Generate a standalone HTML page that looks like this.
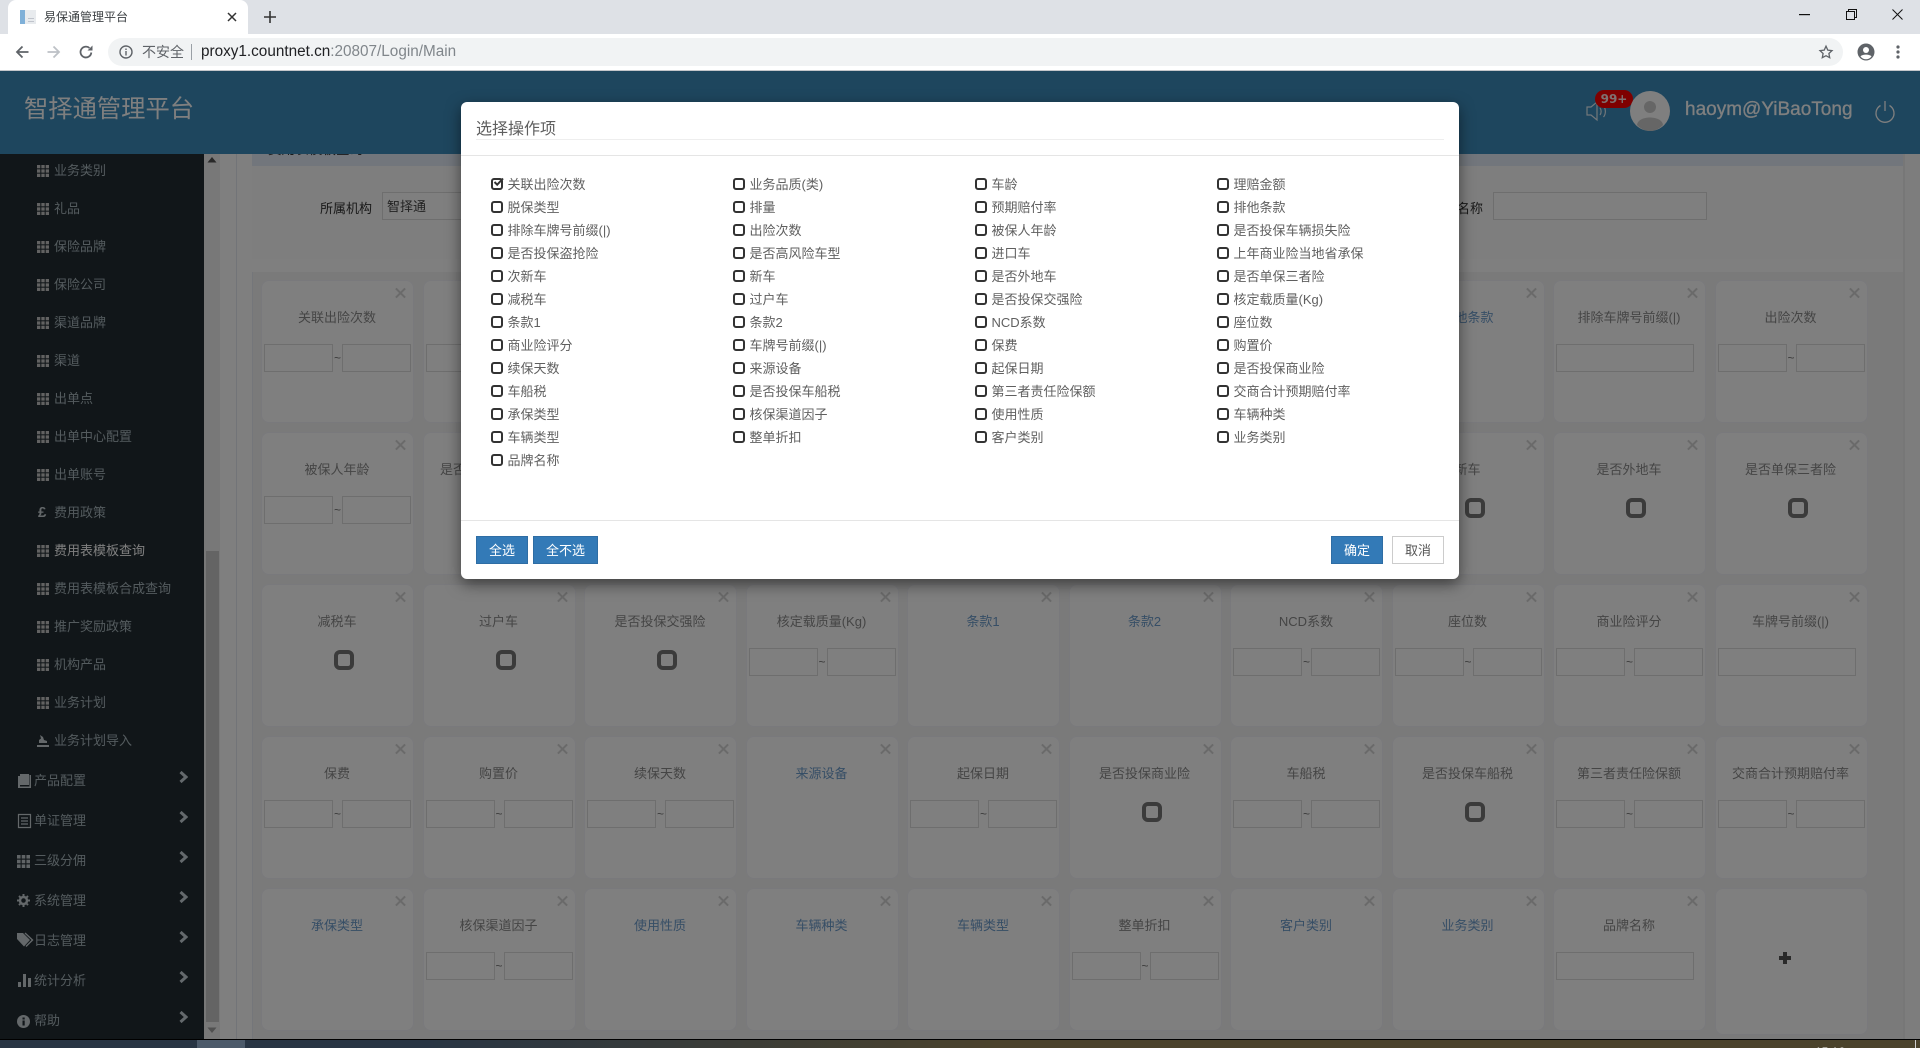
<!DOCTYPE html>
<html lang="zh-CN">
<head>
<meta charset="utf-8">
<title>易保通管理平台</title>
<style>
*,*::before,*::after{box-sizing:border-box;margin:0;padding:0}
html,body{width:1920px;height:1048px;overflow:hidden;background:#f5f5f5}
body{position:relative;font-family:"Liberation Sans","Noto Sans CJK SC",sans-serif;font-size:13px;color:#555}
/* browser chrome */
#strip{position:absolute;left:0;top:0;width:1920px;height:34px;background:#dee1e6}
#tab{position:absolute;left:8px;top:0;width:240px;height:34px;background:#fff;border-radius:8px 8px 0 0}
#bar{position:absolute;left:0;top:34px;width:1920px;height:36px;background:#fff}
#line{position:absolute;left:0;top:70px;width:1920px;height:1px;background:#c4c6ca}
#addr{position:absolute;left:108px;top:38px;width:1735px;height:28px;background:#f1f3f4;border-radius:14px}
.ctext{position:absolute;line-height:20px;white-space:nowrap}
svg{position:absolute;overflow:visible}
/* page */
#head{position:absolute;left:0;top:71px;width:1920px;height:83px;background:#3c8dbc;z-index:2}
#side{position:absolute;left:0;top:154px;width:204px;height:885px;background:#222d32;overflow:hidden}
.s{position:absolute;left:0;width:204px;height:18px;line-height:18px;color:#a8b6bd;white-space:nowrap;padding-left:54px;transform:translateY(1px)}
.m{padding-left:34px}
.s svg.i{left:37px;top:3px;width:12px;height:12px;fill:#c4c4c4}
.m svg.i{left:17px;top:3px;width:13px;height:13px;fill:#c0c8cd}
.s svg.ch{left:179px;top:-10px;width:9px;height:12px;fill:none;stroke:#c8d3d9;stroke-width:3}
.cur{color:#fff}
#track{position:absolute;left:204px;top:154px;width:16px;height:885px;background:#f1f1f1}
#thumb{position:absolute;left:206px;top:551px;width:13px;height:471px;background:#c9c9c9}
#gut{position:absolute;left:220px;top:154px;width:32px;height:885px;background:#ffffff}
#gline{position:absolute;left:236px;top:154px;width:1px;height:885px;background:#e4e8f0}
#main{position:absolute;left:252px;top:154px;width:1651px;height:885px;background:#f5f5f5;border-left:1px solid #e8ecf4}
#rgut{position:absolute;left:1903px;top:154px;width:17px;height:885px;background:#fafafa;border-left:2px solid #eeeeee}
#band{position:absolute;left:252px;top:154px;width:1651px;height:12px;background:#e4ecf8}
#panel{position:absolute;left:252px;top:166px;width:1651px;height:93px;background:#fcfcfc}
#band2{position:absolute;left:252px;top:259px;width:1651px;height:13px;background:#fff}
.ph{position:absolute;line-height:18px;white-space:nowrap;color:#333}
.in{position:absolute;top:192px;height:28px;border:1px solid #ddd;background:#fff;line-height:27px;padding-left:4px;color:#444}
/* cards */
.k{position:absolute;width:153px;height:143px;background:#fff;border-radius:8px;border:1px solid #f2f3f8;text-align:center}
.k::before,.k::after{content:"";position:absolute;left:132px;top:11px;width:13px;height:2px;background:#d4d4d4}
.k::before{transform:rotate(45deg)}.k::after{transform:rotate(-45deg)}
.k.add::before,.k.add::after{display:none}
.k b{position:absolute;left:-1.500px;top:28px;width:153px;font-weight:400;line-height:18px;color:#8a8a8a;white-space:nowrap}
.k b.l{color:#6d9ccc}
.k i{position:absolute;border:1px solid #ddd;height:28px;top:63px;background:#fff}
.k i.a{left:2px;width:69px}.k i.b{left:80px;width:69px}
.k i.w{left:2px;width:138px}
.k i.t{left:72px;top:65px;width:20px;height:20px;border:4px solid #777;border-radius:6px;background:transparent}
.k em{position:absolute;left:71px;top:67px;width:9px;font-style:normal;line-height:20px;font-size:12px;color:#777}
.c0{left:261px}.c1{left:422.5px}.c2{left:584px}.c3{left:745.5px}.c4{left:907px}.c5{left:1068.5px}.c6{left:1230px}.c7{left:1391.5px}.c8{left:1553px}.c9{left:1714.500px}
.r0{top:280px}.r1{top:432px}.r2{top:584px}.r3{top:736px}.r4{top:888px}
#ov{position:absolute;left:0;top:71px;width:1920px;height:968px;background:rgba(0,0,0,.5);z-index:3}
/* dialog */
#dlg{position:absolute;left:461px;top:102px;width:998px;height:477px;background:#fff;border-radius:6px;box-shadow:0 5px 15px rgba(0,0,0,.5);z-index:4}
#dt{position:absolute;left:15px;top:17px;font-size:16px;line-height:22px;color:#5f5f5f;white-space:nowrap}
#dl1{position:absolute;left:15px;top:37px;width:968px;height:1px;background:#eee}
#dl2{position:absolute;left:0;top:53px;width:998px;height:1px;background:#e5e5e5}
#dl3{position:absolute;left:0;top:418px;width:998px;height:1px;background:#e5e5e5}
#lst{position:absolute;left:30px;top:70px;display:grid;grid-template-columns:repeat(4,242px);grid-auto-rows:23px}
#lst div{position:relative;padding-left:16.500px;line-height:25px;height:23px;color:#5f5f5f;white-space:nowrap}
#lst div::before{content:"";position:absolute;left:0;top:6px;width:12px;height:12px;border:2px solid #333;border-radius:3px}
.btn{position:absolute;top:434px;height:28px;line-height:28px;text-align:center;background:#337ab7;border:1px solid #2e6da4;color:#fff}
.btn.d{background:#fff;border:1px solid #ccc;color:#555}
/* taskbar */
#tb{position:absolute;left:0;top:1039px;width:1920px;height:9px;border-top:1px solid #000;background:linear-gradient(90deg,#283544 0,#283544 420px,#4b432c 1000px,#4b432c 100%);z-index:5;overflow:hidden}
#tbh{position:absolute;left:197px;top:0;width:48px;height:8px;background:#4c5a6a}
#tbt{position:absolute;left:1815px;top:5px;color:#fff;font-size:12px;line-height:14px}
#tbl{position:absolute;left:1915px;top:0;width:1px;height:8px;background:#cfcfcf}
</style>
</head>
<body>
<svg width="0" height="0" style="position:absolute">
<defs>
<symbol id="th" viewBox="0 0 12 12"><rect x="0" y="0" width="3.3" height="3.3"/><rect x="4.35" y="0" width="3.3" height="3.3"/><rect x="8.7" y="0" width="3.3" height="3.3"/><rect x="0" y="4.35" width="3.3" height="3.3"/><rect x="4.35" y="4.35" width="3.3" height="3.3"/><rect x="8.7" y="4.35" width="3.3" height="3.3"/><rect x="0" y="8.7" width="3.3" height="3.3"/><rect x="4.35" y="8.7" width="3.3" height="3.3"/><rect x="8.7" y="8.7" width="3.3" height="3.3"/></symbol>
<symbol id="chv" viewBox="0 0 9 12"><path d="M1.5 1l5.5 5-5.5 5"/></symbol>
</defs>
</svg>

<!-- Browser chrome -->
<div id="strip"></div>
<div id="tab"></div>
<svg style="left:20px;top:10px" width="16" height="14" viewBox="0 0 16 14"><rect x="0" y="0" width="5" height="14" fill="#7fb0d8"/><rect x="5" y="0" width="11" height="14" fill="#e8ebee"/><rect x="8" y="8" width="6" height="1" fill="#c0c4cc"/><rect x="8" y="11" width="6" height="1" fill="#c0c4cc"/></svg>
<div class="ctext" style="left:44px;top:7px;font-size:12px;color:#3c4043">易保通管理平台</div>
<svg style="left:228px;top:13px" width="8" height="8" viewBox="0 0 8 8"><path d="M0 0l8 8M8 0L0 8" stroke="#333" stroke-width="1.5"/></svg>
<svg style="left:264px;top:11px" width="12" height="12" viewBox="0 0 12 12"><path d="M6 0v12M0 6h12" stroke="#333" stroke-width="1.6"/></svg>
<svg style="left:1799px;top:14px" width="11" height="2"><rect width="11" height="1.2" fill="#111"/></svg>
<svg style="left:1846px;top:9px" width="11" height="11" viewBox="0 0 11 11"><path d="M.5 2.5h8v8h-8zM2.5 2.5v-2h8v8h-2" fill="none" stroke="#111"/></svg>
<svg style="left:1892px;top:9px" width="11" height="11" viewBox="0 0 11 11"><path d="M.5.5l10 10M10.500 .5l-10 10" stroke="#111" stroke-width="1"/></svg>
<div id="bar"></div>
<div id="line"></div>
<svg style="left:15px;top:45px" width="14" height="14" viewBox="0 0 14 14"><path d="M13.500 7H2M7.500 1.500L2 7l5.500 5.500" fill="none" stroke="#5f6368" stroke-width="1.8"/></svg>
<svg style="left:47px;top:45px" width="14" height="14" viewBox="0 0 14 14"><path d="M.5 7H12M6.500 1.500L12 7l-5.500 5.500" fill="none" stroke="#bdc1c6" stroke-width="1.8"/></svg>
<svg style="left:79px;top:45px" width="14" height="14" viewBox="0 0 14 14"><path d="M12.300 7.500A5.400 5.400 0 1 1 10.500 3" fill="none" stroke="#5f6368" stroke-width="1.8"/><path d="M8.500 5.500H13.500V.5z" fill="#5f6368"/></svg>
<div id="addr"></div>
<svg style="left:119px;top:45px" width="14" height="14" viewBox="0 0 14 14"><circle cx="7" cy="7" r="6" fill="none" stroke="#5f6368" stroke-width="1.400"/><rect x="6.300" y="6" width="1.400" height="4.500" fill="#5f6368"/><rect x="6.300" y="3.500" width="1.400" height="1.500" fill="#5f6368"/></svg>
<div class="ctext" style="left:142px;top:42px;font-size:14px;color:#5f6368">不安全</div>
<div style="position:absolute;left:191px;top:44px;width:1px;height:16px;background:#9aa0a6"></div>
<div class="ctext" style="left:201px;top:42px;font-size:15.300px;color:#80868b"><span style="color:#202124">proxy1.countnet.cn</span>:20807/Login/Main</div>
<svg style="left:1819px;top:45px" width="14" height="14" viewBox="0 0 14 14"><path d="M7 1.200l1.800 3.900 4.200.5-3.100 2.900.8 4.200L7 10.700l-3.700 2 .8-4.200L1 5.600l4.200-.5z" fill="none" stroke="#5f6368" stroke-width="1.300"/></svg>
<svg style="left:1857px;top:43px" width="18" height="18" viewBox="0 0 18 18"><circle cx="9" cy="9" r="8.500" fill="#5f6368"/><circle cx="9" cy="7" r="3" fill="#fff"/><path d="M3.500 13.500c1.500-2.500 9.500-2.500 11 0-1.500 2-3.500 2.800-5.500 2.800s-4-.8-5.500-2.800z" fill="#fff"/></svg>
<svg style="left:1896px;top:45px" width="4" height="14" viewBox="0 0 4 14"><circle cx="2" cy="2" r="1.600" fill="#5f6368"/><circle cx="2" cy="7" r="1.600" fill="#5f6368"/><circle cx="2" cy="12" r="1.600" fill="#5f6368"/></svg>

<!-- Page -->
<div id="main"></div>
<div id="band"></div>
<div id="panel"></div>
<div id="band2"></div>
<div class="ph" style="left:268px;top:141px;font-size:13.600px;z-index:1">费用表模板查询</div>
<div class="ph" style="left:320px;top:200px">所属机构</div>
<div class="in" style="left:382px;width:230px">智择通</div>
<div class="ph" style="left:1457px;top:200px">名称</div>
<div class="in" style="left:1493px;width:214px"></div>
<div id="gut"></div><div id="gline"></div>
<div id="rgut"></div>
<div id="track"></div><div id="thumb"></div>
<svg style="left:207px;top:157px" width="10" height="6" viewBox="0 0 10 6"><path d="M5 0l4.500 5.500H.5z" fill="#505050"/></svg>
<svg style="left:207px;top:1027px" width="10" height="6" viewBox="0 0 10 6"><path d="M5 6L9.500.5H.5z" fill="#a0a0a0"/></svg>

<!-- Cards -->
<div class="k c0 r0"><b>关联出险次数</b><i class="a"></i><em>~</em><i class="b"></i></div>
<div class="k c1 r0"><b>业务品质(类)</b><i class="a"></i><em>~</em><i class="b"></i></div>
<div class="k c2 r0"><b>车龄</b></div>
<div class="k c3 r0"><b>理赔金额</b></div>
<div class="k c4 r0"><b>脱保类型</b></div>
<div class="k c5 r0"><b>排量</b></div>
<div class="k c6 r0"><b>预期赔付率</b></div>
<div class="k c7 r0"><b class="l">排他条款</b></div>
<div class="k c8 r0"><b>排除车牌号前缀(|)</b><i class="w"></i></div>
<div class="k c9 r0"><b>出险次数</b><i class="a"></i><em>~</em><i class="b"></i></div>

<div class="k c0 r1"><b>被保人年龄</b><i class="a"></i><em>~</em><i class="b"></i></div>
<div class="k c1 r1"><b>是否投保车辆损失险</b><i class="t"></i></div>
<div class="k c2 r1"><b>是否投保盗抢险</b></div>
<div class="k c3 r1"><b>是否高风险车型</b></div>
<div class="k c4 r1"><b>进口车</b></div>
<div class="k c5 r1"><b>上年商业险当地省承保</b></div>
<div class="k c6 r1"><b>次新车</b></div>
<div class="k c7 r1"><b>新车</b><i class="t"></i></div>
<div class="k c8 r1"><b>是否外地车</b><i class="t"></i></div>
<div class="k c9 r1"><b>是否单保三者险</b><i class="t"></i></div>

<div class="k c0 r2"><b>减税车</b><i class="t"></i></div>
<div class="k c1 r2"><b>过户车</b><i class="t"></i></div>
<div class="k c2 r2"><b>是否投保交强险</b><i class="t"></i></div>
<div class="k c3 r2"><b>核定载质量(Kg)</b><i class="a"></i><em>~</em><i class="b"></i></div>
<div class="k c4 r2"><b class="l">条款1</b></div>
<div class="k c5 r2"><b class="l">条款2</b></div>
<div class="k c6 r2"><b>NCD系数</b><i class="a"></i><em>~</em><i class="b"></i></div>
<div class="k c7 r2"><b>座位数</b><i class="a"></i><em>~</em><i class="b"></i></div>
<div class="k c8 r2"><b>商业险评分</b><i class="a"></i><em>~</em><i class="b"></i></div>
<div class="k c9 r2"><b>车牌号前缀(|)</b><i class="w"></i></div>

<div class="k c0 r3"><b>保费</b><i class="a"></i><em>~</em><i class="b"></i></div>
<div class="k c1 r3"><b>购置价</b><i class="a"></i><em>~</em><i class="b"></i></div>
<div class="k c2 r3"><b>续保天数</b><i class="a"></i><em>~</em><i class="b"></i></div>
<div class="k c3 r3"><b class="l">来源设备</b></div>
<div class="k c4 r3"><b>起保日期</b><i class="a"></i><em>~</em><i class="b"></i></div>
<div class="k c5 r3"><b>是否投保商业险</b><i class="t"></i></div>
<div class="k c6 r3"><b>车船税</b><i class="a"></i><em>~</em><i class="b"></i></div>
<div class="k c7 r3"><b>是否投保车船税</b><i class="t"></i></div>
<div class="k c8 r3"><b>第三者责任险保额</b><i class="a"></i><em>~</em><i class="b"></i></div>
<div class="k c9 r3"><b>交商合计预期赔付率</b><i class="a"></i><em>~</em><i class="b"></i></div>

<div class="k c0 r4"><b class="l">承保类型</b></div>
<div class="k c1 r4"><b>核保渠道因子</b><i class="a"></i><em>~</em><i class="b"></i></div>
<div class="k c2 r4"><b class="l">使用性质</b></div>
<div class="k c3 r4"><b class="l">车辆种类</b></div>
<div class="k c4 r4"><b class="l">车辆类型</b></div>
<div class="k c5 r4"><b>整单折扣</b><i class="a"></i><em>~</em><i class="b"></i></div>
<div class="k c6 r4"><b class="l">客户类别</b></div>
<div class="k c7 r4"><b class="l">业务类别</b></div>
<div class="k c8 r4"><b>品牌名称</b><i class="w"></i></div>
<div class="k c9 r4 add" style="height:147px"><svg style="left:63px;top:63px" width="12" height="12" viewBox="0 0 12 12"><path d="M6 0v12M0 6h12" stroke="#555" stroke-width="4"/></svg></div>

<!-- Sidebar -->
<div id="side">
<div class="s" style="top:7px"><svg class="i"><use href="#th"/></svg>业务类别</div>
<div class="s" style="top:45px"><svg class="i"><use href="#th"/></svg>礼品</div>
<div class="s" style="top:83px"><svg class="i"><use href="#th"/></svg>保险品牌</div>
<div class="s" style="top:121px"><svg class="i"><use href="#th"/></svg>保险公司</div>
<div class="s" style="top:159px"><svg class="i"><use href="#th"/></svg>渠道品牌</div>
<div class="s" style="top:197px"><svg class="i"><use href="#th"/></svg>渠道</div>
<div class="s" style="top:235px"><svg class="i"><use href="#th"/></svg>出单点</div>
<div class="s" style="top:273px"><svg class="i"><use href="#th"/></svg>出单中心配置</div>
<div class="s" style="top:311px"><svg class="i"><use href="#th"/></svg>出单账号</div>
<div class="s" style="top:349px"><span style="position:absolute;left:38px;top:0;font-size:15px;font-weight:700;color:#c8d0d5">£</span>费用政策</div>
<div class="s cur" style="top:387px"><svg class="i"><use href="#th"/></svg>费用表模板查询</div>
<div class="s" style="top:425px"><svg class="i"><use href="#th"/></svg>费用表模板合成查询</div>
<div class="s" style="top:463px"><svg class="i"><use href="#th"/></svg>推广奖励政策</div>
<div class="s" style="top:501px"><svg class="i"><use href="#th"/></svg>机构产品</div>
<div class="s" style="top:539px"><svg class="i"><use href="#th"/></svg>业务计划</div>
<div class="s" style="top:577px"><svg style="left:37px;top:3px" width="12" height="12" viewBox="0 0 12 12"><path d="M2 5l2-1.500L3 0l3 2 1 3 3 1v2H2zM0 10h12v2H0z" fill="#c8d0d5"/></svg>业务计划导入</div>

<div class="s m" style="top:617px"><svg style="left:18px;top:2px" width="13" height="14" viewBox="0 0 13 14"><path d="M2 0h9v11H2zM11.500 1H13v13H2v-1.500h9.500z" fill="#c8d0d5"/><path d="M0 2h2v12H0z" fill="#c8d0d5"/></svg>产品配置<svg class="ch" style="top:-1px"><use href="#chv"/></svg></div>
<div class="s m" style="top:657px"><svg style="left:18px;top:2px" width="13" height="14" viewBox="0 0 13 14"><path d="M.5.500h12v13H.5zM3 4h7M3 7h7M3 10h7" fill="none" stroke="#c8d0d5" stroke-width="1.200"/></svg>单证管理<svg class="ch" style="top:-1px"><use href="#chv"/></svg></div>
<div class="s m" style="top:697px"><svg class="i" style="left:17px"><use href="#th"/></svg>三级分佣<svg class="ch" style="top:-1px"><use href="#chv"/></svg></div>
<div class="s m" style="top:737px"><svg style="left:17px;top:2px" width="13" height="13" viewBox="0 0 13 13"><circle cx="6.500" cy="6.500" r="3.500" fill="none" stroke="#c8d0d5" stroke-width="2.500"/><path d="M6.500 0v13M0 6.500h13M2 2l9 9M11 2l-9 9" stroke="#c8d0d5" stroke-width="2" stroke-dasharray="2 9"/></svg>系统管理<svg class="ch" style="top:-1px"><use href="#chv"/></svg></div>
<div class="s m" style="top:777px"><svg style="left:17px;top:1px" width="16" height="14" viewBox="0 0 16 14"><path d="M0 0h6l7 7-6 6.500L0 6z" fill="#c8d0d5"/><path d="M8 0l7.500 7-6.500 6.500" fill="none" stroke="#c8d0d5" stroke-width="1.400"/></svg>日志管理<svg class="ch" style="top:-1px"><use href="#chv"/></svg></div>
<div class="s m" style="top:817px"><svg style="left:18px;top:2px" width="13" height="13" viewBox="0 0 13 13"><path d="M0 8h3v5H0zM5 0h3v13H5zM10 4h3v9h-3z" fill="#c8d0d5"/></svg>统计分析<svg class="ch" style="top:-1px"><use href="#chv"/></svg></div>
<div class="s m" style="top:857px"><svg style="left:17px;top:3px" width="13" height="13" viewBox="0 0 13 13"><circle cx="6.500" cy="6.500" r="6.500" fill="#c8d0d5"/><rect x="5.500" y="5.500" width="2.200" height="5" fill="#222d32"/><rect x="5.500" y="2.500" width="2.200" height="2" fill="#222d32"/></svg>帮助<svg class="ch" style="top:-1px"><use href="#chv"/></svg></div>
</div>

<!-- Header -->
<div id="head">
<div class="ctext" style="left:24px;top:22px;font-size:24.300px;line-height:34px;color:#fff">智择通管理平台</div>
<svg style="left:1586px;top:30px" width="22" height="20" viewBox="0 0 22 20"><path d="M1 6h4l6-5v18l-6-5H1zM14 7c1.500 2 1.500 5 0 7M17.500 5c2.500 3 2.500 8 0 11" fill="none" stroke="#ffffff" stroke-width="1.200" opacity=".85"/></svg>
<div style="position:absolute;left:1595px;top:19px;width:38px;height:18px;border-radius:9px;background:#f00;color:#ffe0e0;font-size:12px;font-weight:700;line-height:18px;text-align:center;font-family:'DejaVu Sans',sans-serif">99+</div>
<svg style="left:1630px;top:20px" width="40" height="40" viewBox="0 0 40 40"><circle cx="20" cy="20" r="20" fill="#fff"/><circle cx="20" cy="16" r="6" fill="#ccc"/><path d="M7 34c1-10 25-10 26 0-3.500 3.700-8 6-13 6s-9.500-2.300-13-6z" fill="#ccc"/></svg>
<div class="ctext" style="left:1685px;top:26px;font-size:19px;line-height:26px;color:#fff;-webkit-text-stroke:.3px #fff">haoym@YiBaoTong</div>
<svg style="left:1875px;top:30px" width="20" height="22" viewBox="0 0 20 22"><path d="M5.500 4.500a9 9 0 1 0 9 0M10 0v10" fill="none" stroke="#fff" stroke-width="1.300"/></svg>
</div>

<div id="ov"></div>

<!-- Dialog -->
<div id="dlg">
<div id="dt">选择操作项</div>
<div id="dl1"></div>
<div id="dl2"></div>
<div id="lst">
<div>关联出险次数<svg style="left:1px;top:5px" width="12" height="11" viewBox="0 0 12 11"><path d="M2.500 5l2.700 2.700L11 1.500" fill="none" stroke="#333" stroke-width="2"/></svg></div><div>业务品质(类)</div><div>车龄</div><div>理赔金额</div>
<div>脱保类型</div><div>排量</div><div>预期赔付率</div><div>排他条款</div>
<div>排除车牌号前缀(|)</div><div>出险次数</div><div>被保人年龄</div><div>是否投保车辆损失险</div>
<div>是否投保盗抢险</div><div>是否高风险车型</div><div>进口车</div><div>上年商业险当地省承保</div>
<div>次新车</div><div>新车</div><div>是否外地车</div><div>是否单保三者险</div>
<div>减税车</div><div>过户车</div><div>是否投保交强险</div><div>核定载质量(Kg)</div>
<div>条款1</div><div>条款2</div><div>NCD系数</div><div>座位数</div>
<div>商业险评分</div><div>车牌号前缀(|)</div><div>保费</div><div>购置价</div>
<div>续保天数</div><div>来源设备</div><div>起保日期</div><div>是否投保商业险</div>
<div>车船税</div><div>是否投保车船税</div><div>第三者责任险保额</div><div>交商合计预期赔付率</div>
<div>承保类型</div><div>核保渠道因子</div><div>使用性质</div><div>车辆种类</div>
<div>车辆类型</div><div>整单折扣</div><div>客户类别</div><div>业务类别</div>
<div>品牌名称</div>
</div>
<div id="dl3"></div>
<div class="btn" style="left:15px;width:52px">全选</div>
<div class="btn" style="left:72px;width:65px">全不选</div>
<div class="btn" style="left:870px;width:52px">确定</div>
<div class="btn d" style="left:931px;width:52px">取消</div>
</div>

<!-- Taskbar -->
<div id="tb"><div id="tbh"></div><div id="tbt">15:16</div><div id="tbl"></div></div>
</body>
</html>
